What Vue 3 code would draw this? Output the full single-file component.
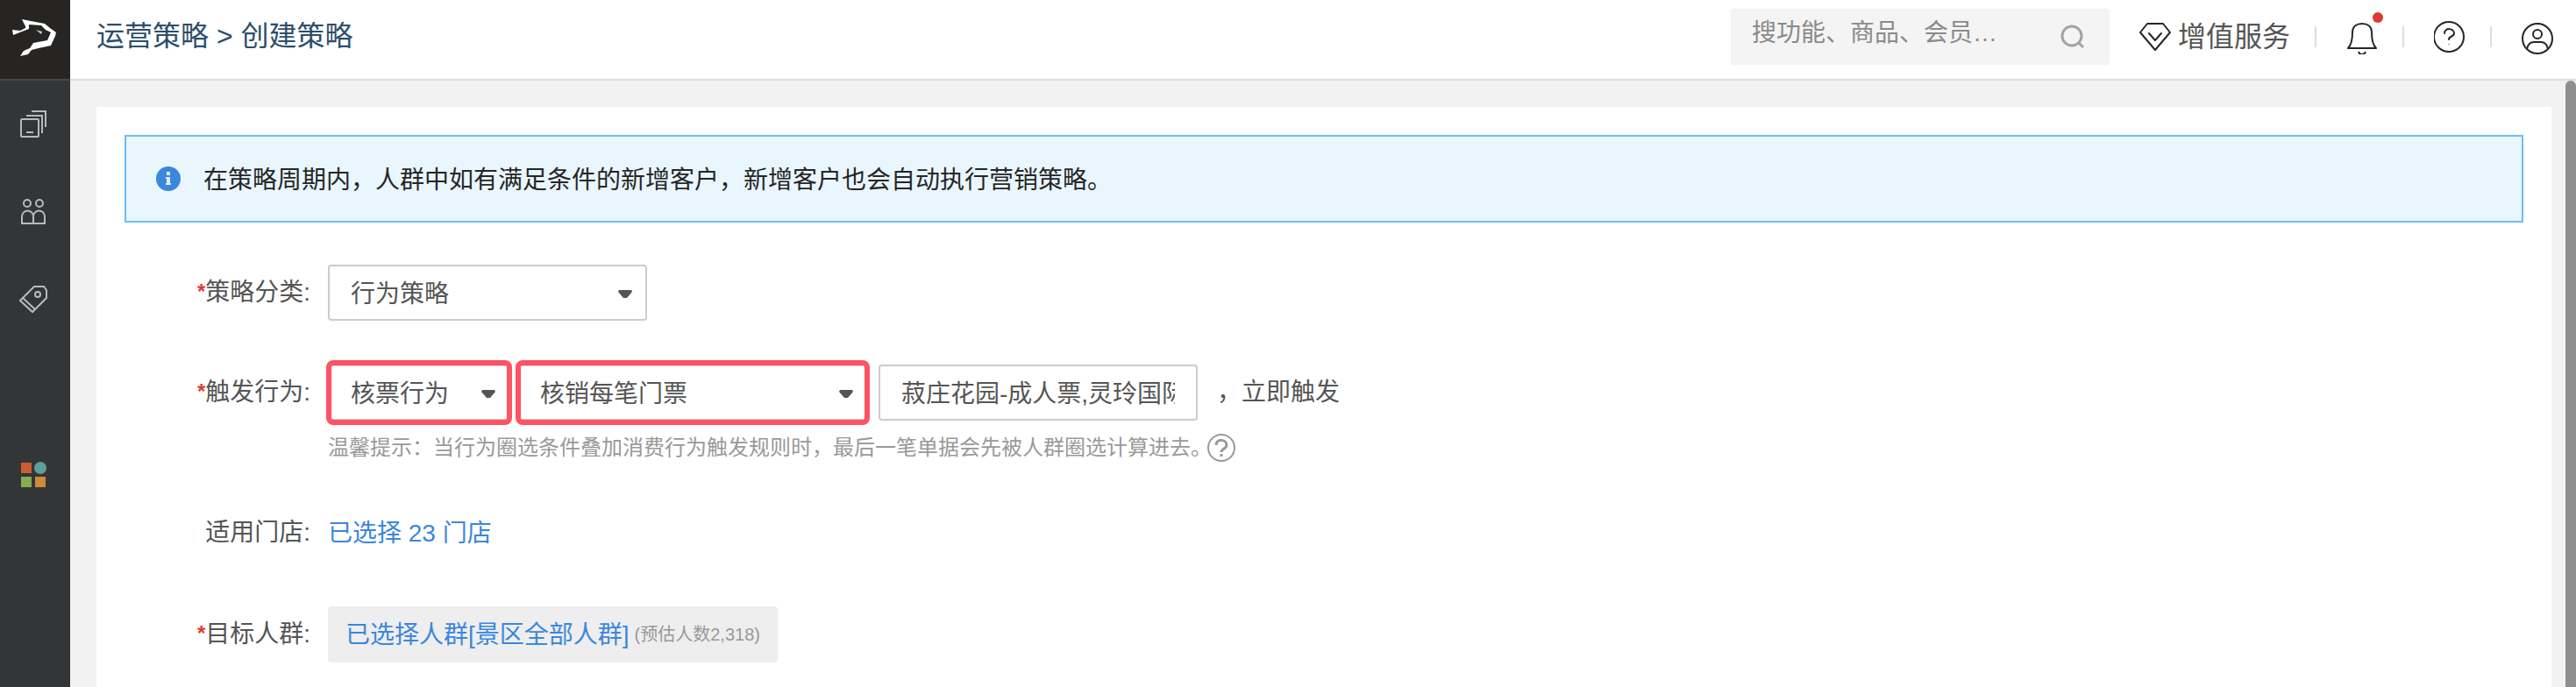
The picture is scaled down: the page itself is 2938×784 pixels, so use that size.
<script setup>
import { ref } from 'vue'

const keyword = ref('')
const category = ref('行为策略')
const action = ref('核票行为')
const rule = ref('核销每笔门票')
const tickets = ref('菽庄花园-成人票,灵玲国际')
</script>

<template>
  <div class="layout">
    <aside class="sidebar">
      <a class="logo" href="#" aria-label="首页">
        <svg width="52" height="44" viewBox="0 0 52 44">
          <path
            d="M0 13l9 1 6-3V9l-4-8 10 2 16 3 6 5 7 5-1 4-5 11-14 3-8 2-4 5-9 2 4-6 7-3 4-6 16-3 4-9-6-3-5-5-14-1v5l-8 3-10 4z"
            fill="#fff"
          />
          <path d="M27 13l7 2-1 3z" fill="#ccc" />
        </svg>
      </a>
      <nav class="menu">
        <a href="#" aria-label="商品">
          <svg width="32" height="32" viewBox="0 0 32 32" fill="none" stroke="#b9babb" stroke-width="2">
            <rect x="2" y="10" width="20" height="20" rx="1" />
            <path d="M8 6h18v20" />
            <path d="M14 1h16v18" />
            <path d="M8 25h8" />
          </svg>
        </a>
        <a href="#" aria-label="会员">
          <svg width="32" height="32" viewBox="0 0 32 32" fill="none" stroke="#b9babb" stroke-width="2">
            <circle cx="9" cy="6" r="4" />
            <circle cx="23" cy="6" r="4" />
            <path d="M3 29V21a6 6 0 0 1 13 0V29zM16 29V21a6 6 0 0 1 13 0V29z" />
          </svg>
        </a>
        <a href="#" aria-label="营销">
          <svg width="32" height="32" viewBox="0 0 32 32" fill="none" stroke="#b9babb" stroke-width="2">
            <path d="M17 1h11l3 4v9L15 30 1 17z" />
            <path d="M4 14l14 13" />
            <circle cx="21" cy="10" r="3" />
          </svg>
        </a>
        <a class="apps" href="#" aria-label="应用">
          <svg width="32" height="32" viewBox="0 0 32 32">
            <rect x="2" y="2" width="12" height="12" fill="#cb5c36" />
            <circle cx="24" cy="8" r="7" fill="#5da096" />
            <rect x="2" y="18" width="12" height="12" fill="#86ad52" />
            <rect x="18" y="18" width="12" height="12" fill="#cd8a38" />
          </svg>
        </a>
      </nav>
    </aside>

    <div class="main">
      <header class="topbar">
        <h1 class="title">运营策略 &gt; 创建策略</h1>
        <div class="search">
          <input v-model="keyword" type="text" placeholder="搜功能、商品、会员…" aria-label="搜索" />
          <svg width="28" height="28" viewBox="0 0 28 28" fill="none" stroke="#a3a3a3" stroke-width="3">
            <circle cx="13" cy="13" r="11" />
            <path d="M20 20l6 6" />
          </svg>
        </div>
        <a class="service" href="#">
          <svg
            width="36"
            height="36"
            viewBox="0 0 36 36"
            fill="none"
            stroke="#262626"
            stroke-width="2"
            stroke-linejoin="round"
          >
            <path d="M9 3h18l8 10-17 20L1 13z" />
            <path d="M11 14l7 8 7-8" stroke-linecap="round" />
          </svg>
          <span>增值服务</span>
        </a>
        <span class="divider"></span>
        <button class="tool" type="button" aria-label="消息">
          <svg width="36" height="40" viewBox="0 0 36 40" fill="none" stroke="#262626" stroke-width="2">
            <path d="M2 33h32c-4-4-5-10-5-18 0-7-5-10-11-10S7 8 7 15c0 8-1 14-5 18z" stroke-linejoin="round" />
            <path d="M14 37c1 4 7 4 8 0" />
          </svg>
          <i class="dot"></i>
        </button>
        <span class="divider"></span>
        <button class="tool" type="button" aria-label="帮助">
          <svg width="36" height="36" viewBox="0 0 36 36" fill="none" stroke="#262626" stroke-width="2">
            <circle cx="17" cy="18" r="17" />
            <path d="M12 14c0-7 11-6 11 0 0 4-6 3-6 7" stroke-linecap="round" />
            <path d="M17 26v1" stroke-width="1" />
          </svg>
        </button>
        <span class="divider"></span>
        <button class="tool" type="button" aria-label="账号">
          <svg width="36" height="40" viewBox="0 0 36 40" fill="none" stroke="#262626" stroke-width="2">
            <circle cx="18" cy="22" r="17" />
            <circle cx="18" cy="17" r="5" />
            <path d="M6 34c1-5 4-8 8-8h8c4 0 7 3 8 8" />
          </svg>
        </button>
      </header>

      <div class="body">
        <main class="panel">
          <div class="notice">
            <svg width="28" height="28" viewBox="0 0 28 28">
              <circle cx="14" cy="14" r="14" fill="#3a87dd" />
              <path d="M12 6h4v4h-4zM11 12h5v7h1v2h-6v-2h1v-5h-1z" fill="#dcecfa" />
            </svg>
            <p>在策略周期内，人群中如有满足条件的新增客户，新增客户也会自动执行营销策略。</p>
          </div>

          <form class="form" @submit.prevent>
            <div class="row">
              <label class="label" for="category"><b>*</b>策略分类:</label>
              <div class="select category">
                <select id="category" v-model="category">
                  <option>行为策略</option>
                </select>
                <svg width="16" height="9" viewBox="0 0 16 9"><path d="M1 0h14l1 2-6 7H6L0 2z" fill="#555" /></svg>
              </div>
            </div>

            <div class="row">
              <label class="label" for="action"><b>*</b>触发行为:</label>
              <div class="field">
                <div class="controls">
                  <div class="selects">
                    <div class="select action marked">
                      <select id="action" v-model="action">
                        <option>核票行为</option>
                      </select>
                      <svg width="16" height="9" viewBox="0 0 16 9"><path d="M1 0h14l1 2-6 7H6L0 2z" fill="#555" /></svg>
                    </div>
                    <div class="select rule marked">
                      <select v-model="rule" aria-label="触发规则">
                        <option>核销每笔门票</option>
                      </select>
                      <svg width="16" height="9" viewBox="0 0 16 9"><path d="M1 0h14l1 2-6 7H6L0 2z" fill="#555" /></svg>
                    </div>
                  </div>
                  <input v-model="tickets" class="tickets" type="text" aria-label="门票" />
                  <span class="suffix">，立即触发</span>
                </div>
                <p class="hint">
                  <span>温馨提示：当行为圈选条件叠加消费行为触发规则时，最后一笔单据会先被人群圈选计算进去。</span>
                  <svg width="34" height="34" viewBox="0 0 34 34" fill="none" stroke="#999" stroke-width="2">
                    <circle cx="17" cy="17" r="15" />
                    <path d="M11 14c0-8 12-7 12 0 0 4-6 4-6 8" stroke-width="3" />
                    <path d="M17 24v3" stroke-width="3" />
                  </svg>
                </p>
              </div>
            </div>

            <div class="row">
              <span class="label">适用门店:</span>
              <a class="link" href="#">已选择 23 门店</a>
            </div>

            <div class="row">
              <span class="label"><b>*</b>目标人群:</span>
              <div class="crowd">
                <a class="link" href="#">已选择人群[景区全部人群]</a>
                <small>(预估人数2,318)</small>
              </div>
            </div>
          </form>
        </main>
        <div class="scrollbar"></div>
      </div>
    </div>
  </div>
</template>

<style>
body {
  margin: 0;
  overflow: hidden;
}
</style>

<style scoped>
.layout {
  display: flex;
  min-height: 100vh;
  font-family: 'Liberation Sans', 'Noto Sans CJK SC', sans-serif;
  font-size: 28px;
  color: #555;
}

.layout * {
  box-sizing: border-box;
}

svg {
  display: block;
  flex: none;
}

a {
  text-decoration: none;
}

.sidebar {
  flex: 0 0 80px;
  background: #343537;
}

.logo {
  display: flex;
  align-items: center;
  justify-content: center;
  height: 92px;
  padding-bottom: 4px;
  background: #272523;
  border-bottom: 2px solid #47484a;
}

.menu a {
  display: flex;
  align-items: center;
  justify-content: center;
  height: 100px;
  padding-right: 4px;
}

.menu .apps {
  margin-top: 100px;
}

.main {
  flex: 1;
  min-width: 0;
  display: flex;
  flex-direction: column;
}

.topbar {
  display: flex;
  align-items: center;
  height: 92px;
  padding: 0 0 6px 30px;
  background: #fff;
  border-bottom: 2px solid #ddd;
}

.title {
  margin: 0 auto 0 0;
  padding-bottom: 2px;
  font-size: 32px;
  line-height: 40px;
  font-weight: 400;
  color: #2d4e6b;
}

.search {
  display: flex;
  align-items: center;
  width: 432px;
  height: 64px;
  padding: 0 28px 0 24px;
  background: #f4f4f4;
  border-radius: 4px;
}

.search input {
  flex: 1;
  min-width: 0;
  height: 64px;
  padding: 0 0 8px;
  border: 0;
  outline: 0;
  background: none;
  font: inherit;
  color: #555;
}

.search input::placeholder {
  color: #8a8a8a;
  opacity: 1;
}

.service {
  display: flex;
  align-items: center;
  gap: 8px;
  margin: 0 28px 0 34px;
  font-size: 32px;
  line-height: 40px;
  color: #555;
}

.divider {
  width: 2px;
  height: 24px;
  background: #ddd;
}

.tool {
  position: relative;
  width: 98px;
  height: 64px;
  padding: 0 0 0 34px;
  border: 0;
  background: none;
}

.tool:last-child {
  width: 96px;
}

.dot {
  position: absolute;
  top: 4px;
  left: 64px;
  width: 12px;
  height: 12px;
  border-radius: 50%;
  background: #dc3a32;
}

.body {
  flex: 1;
  display: flex;
  background: #f2f2f2;
}

.panel {
  flex: 1;
  min-width: 0;
  margin: 30px 16px 0 30px;
  padding: 32px 32px 0;
  background: #fff;
}

.scrollbar {
  width: 12px;
  border-radius: 6px 6px 0 0;
  background: #8e8e8e;
}

.notice {
  display: flex;
  align-items: center;
  gap: 26px;
  height: 100px;
  padding: 0 34px;
  border: 2px solid #6dbdf2;
  background: #e9f6fd;
  color: #262626;
}

.notice p {
  margin: 0;
  padding-bottom: 3px;
}

.form {
  display: flex;
  flex-direction: column;
  gap: 50px;
  margin-top: 48px;
}

.row {
  display: flex;
  align-items: flex-start;
  gap: 20px;
  line-height: 64px;
}

.label {
  width: 212px;
  height: 64px;
  text-align: right;
}

.label b {
  font-size: 24px;
  line-height: 24px;
  vertical-align: 2px;
  color: #dc3a32;
}

.controls {
  display: flex;
  gap: 12px;
}

.selects {
  display: flex;
  gap: 8px;
}

.select {
  position: relative;
}

.category {
  width: 364px;
}

.action {
  width: 208px;
}

.rule {
  width: 400px;
}

.select select,
.tickets {
  display: block;
  width: 100%;
  height: 64px;
  margin: 0;
  padding: 0 24px;
  border: 2px solid #ccc;
  border-radius: 4px;
  outline: 0;
  background: #fff;
  font: inherit;
  line-height: 40px;
  color: #555;
  appearance: none;
}

.select select {
  padding-top: 3px;
}

.tickets {
  padding-bottom: 2px;
}

.select svg {
  position: absolute;
  top: 29px;
  right: 17px;
  pointer-events: none;
}

/* red frame around the two trigger selects */
.marked::after {
  content: '';
  position: absolute;
  inset: -5px -2px;
  border: 6px solid #ff5364;
  border-radius: 8px;
  pointer-events: none;
}

.controls .tickets {
  width: 364px;
}

.suffix {
  padding-left: 10px;
}

.hint {
  display: flex;
  align-items: center;
  height: 30px;
  margin: 16px 0 0;
  font-size: 24px;
  line-height: 32px;
  color: #999;
}

.hint svg {
  margin-left: -6px;
}

.link {
  line-height: 66px;
  color: #3a87dd;
}

.crowd {
  display: flex;
  gap: 6px;
  height: 64px;
  padding: 0 20px;
  border-radius: 4px;
  background: #eee;
}

.crowd small {
  font-size: 20px;
  color: #999;
}
</style>
